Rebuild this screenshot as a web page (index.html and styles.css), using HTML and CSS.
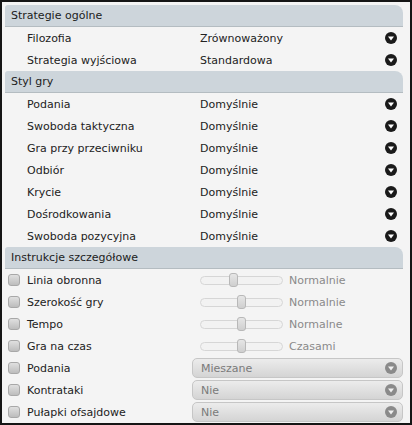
FILE: index.html
```html
<!DOCTYPE html>
<html lang="pl">
<head>
  <meta charset="UTF-8" />
  <title>Instrukcje</title>
  <link rel="stylesheet" href="styles.css">
</head>
<body>
  <div class="panel">
    <div class="section-head">Strategie ogólne</div>
    <div class="row"><span class="label">Filozofia</span><span class="value">Zrównoważony</span><svg class="drop" viewBox="0 0 12 12"><circle cx="6" cy="6" r="6"/><polygon points="3,4.5 9,4.5 6,8.5"/></svg></div>
    <div class="row"><span class="label">Strategia wyjściowa</span><span class="value">Standardowa</span><svg class="drop" viewBox="0 0 12 12"><circle cx="6" cy="6" r="6"/><polygon points="3,4.5 9,4.5 6,8.5"/></svg></div>

    <div class="section-head">Styl gry</div>
    <div class="row"><span class="label">Podania</span><span class="value">Domyślnie</span><svg class="drop" viewBox="0 0 12 12"><circle cx="6" cy="6" r="6"/><polygon points="3,4.5 9,4.5 6,8.5"/></svg></div>
    <div class="row"><span class="label">Swoboda taktyczna</span><span class="value">Domyślnie</span><svg class="drop" viewBox="0 0 12 12"><circle cx="6" cy="6" r="6"/><polygon points="3,4.5 9,4.5 6,8.5"/></svg></div>
    <div class="row"><span class="label">Gra przy przeciwniku</span><span class="value">Domyślnie</span><svg class="drop" viewBox="0 0 12 12"><circle cx="6" cy="6" r="6"/><polygon points="3,4.5 9,4.5 6,8.5"/></svg></div>
    <div class="row"><span class="label">Odbiór</span><span class="value">Domyślnie</span><svg class="drop" viewBox="0 0 12 12"><circle cx="6" cy="6" r="6"/><polygon points="3,4.5 9,4.5 6,8.5"/></svg></div>
    <div class="row"><span class="label">Krycie</span><span class="value">Domyślnie</span><svg class="drop" viewBox="0 0 12 12"><circle cx="6" cy="6" r="6"/><polygon points="3,4.5 9,4.5 6,8.5"/></svg></div>
    <div class="row"><span class="label">Dośrodkowania</span><span class="value">Domyślnie</span><svg class="drop" viewBox="0 0 12 12"><circle cx="6" cy="6" r="6"/><polygon points="3,4.5 9,4.5 6,8.5"/></svg></div>
    <div class="row"><span class="label">Swoboda pozycyjna</span><span class="value">Domyślnie</span><svg class="drop" viewBox="0 0 12 12"><circle cx="6" cy="6" r="6"/><polygon points="3,4.5 9,4.5 6,8.5"/></svg></div>

    <div class="section-head">Instrukcje szczegółowe</div>
    <div class="row check-row"><span class="box"></span><span class="label">Linia obronna</span>
      <span class="slider"><span class="track"></span><span class="thumb" style="left: 29px"></span></span><span class="muted">Normalnie</span></div>
    <div class="row check-row"><span class="box"></span><span class="label">Szerokość gry</span>
      <span class="slider"><span class="track"></span><span class="thumb" style="left: 37px"></span></span><span class="muted">Normalnie</span></div>
    <div class="row check-row"><span class="box"></span><span class="label">Tempo</span>
      <span class="slider"><span class="track"></span><span class="thumb" style="left: 37px"></span></span><span class="muted">Normalne</span></div>
    <div class="row check-row"><span class="box"></span><span class="label">Gra na czas</span>
      <span class="slider"><span class="track"></span><span class="thumb" style="left: 37px"></span></span><span class="muted">Czasami</span></div>
    <div class="row check-row"><span class="box"></span><span class="label">Podania</span>
      <span class="select"><span>Mieszane</span><svg class="drop grey" viewBox="0 0 12 12"><circle cx="6" cy="6" r="6"/><polygon points="3,4.5 9,4.5 6,8.5"/></svg></span></div>
    <div class="row check-row"><span class="box"></span><span class="label">Kontrataki</span>
      <span class="select"><span>Nie</span><svg class="drop grey" viewBox="0 0 12 12"><circle cx="6" cy="6" r="6"/><polygon points="3,4.5 9,4.5 6,8.5"/></svg></span></div>
    <div class="row check-row"><span class="box"></span><span class="label">Pułapki ofsajdowe</span>
      <span class="select"><span>Nie</span><svg class="drop grey" viewBox="0 0 12 12"><circle cx="6" cy="6" r="6"/><polygon points="3,4.5 9,4.5 6,8.5"/></svg></span></div>
  </div>
</body>
</html>
```

FILE: styles.css
```css
* { box-sizing: border-box; margin: 0; padding: 0; }
body { background: #111; font-family: "DejaVu Sans", sans-serif; font-size: 11px; color: #222; }

.panel {
  width: 412px;
  height: 425px;
  border: 2px solid #151515;
  background: #f4f4f4;
  padding: 3px 7px 0 3px;
  overflow: hidden;
}

.section-head {
  height: 22px;
  line-height: 22px;
  padding-left: 6px;
  background: #cdd5db;
  border-bottom: 1px solid #b4bcc1;
  border-radius: 3px 8px 0 0;
  color: #1c1c1c;
}

.row {
  height: 22px;
  display: flex;
  align-items: center;
  padding-left: 22px;
  padding-right: 6px;
}
.row .label { width: 173px; flex: none; }
.row .value { flex: 1; }

.drop { width: 12px; height: 12px; flex: none; }
.drop circle { fill: #1a1a1a; }
.drop polygon { fill: #fff; }
.drop.grey circle { fill: #8a8a8a; }
.drop.grey polygon { fill: #f0f0f0; }

.check-row { padding-left: 3px; padding-right: 0; }
.check-row .label { width: 165px; }
.box {
  width: 12px;
  height: 12px;
  margin-right: 7px;
  border: 1px solid #a8a8a8;
  border-radius: 3px;
  background: linear-gradient(#e0e0e0, #bdbdbd);
}

.slider { position: relative; width: 83px; height: 22px; margin-left: 8px; flex: none; }
.track {
  position: absolute;
  left: 0; right: 0; top: 7px;
  height: 9px;
  border: 1px solid #d6d6d6;
  border-radius: 5px;
  background: #f2f2f2;
}
.thumb {
  position: absolute;
  top: 4px;
  width: 9px;
  height: 14px;
  border: 1px solid #b8b8b8;
  border-radius: 3px;
  background: linear-gradient(#e6e6e6, #cfcfcf);
}
.muted { margin-left: 6px; color: #8a8a8a; }

.select {
  width: 211px;
  height: 20px;
  display: flex;
  align-items: center;
  justify-content: space-between;
  padding: 0 5px 0 8px;
  border: 1px solid #c6c6c6;
  border-radius: 5px;
  background: linear-gradient(#ececec, #d4d4d4);
  color: #7a7a7a;
}
```
